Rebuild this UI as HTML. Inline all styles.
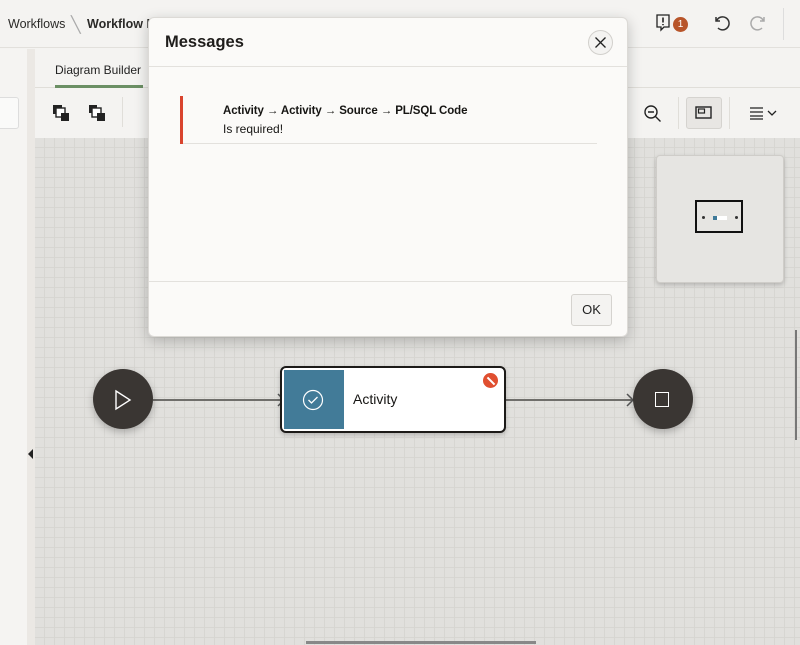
<!DOCTYPE html>
<html><head><style>
*{box-sizing:border-box;margin:0;padding:0}
body{width:800px;height:645px;overflow:hidden;background:#f4f3f1;font-family:"Liberation Sans",sans-serif;position:relative;color:#161513}
.abs{position:absolute}
.grid{left:35px;top:138px;width:765px;height:507px;background-color:#e1e0dd;background-image:linear-gradient(#d7d6d2 1px,transparent 1px),linear-gradient(90deg,#d7d6d2 1px,transparent 1px);background-size:10px 10px;background-position:-1px -1px}
</style></head><body>
<div class="abs" style="left:0;top:0;width:800px;height:48px;background:#f4f3f1;border-bottom:1px solid #e2e0dc"></div>
<div class="abs" style="left:8px;top:17px;font-size:12.5px;color:#2b2a28">Workflows</div>
<div class="abs" style="left:71px;top:15px;font-size:16px;color:#aaa">╲</div>
<div class="abs" style="left:87px;top:17px;font-size:12.5px;font-weight:bold;color:#2b2a28">Workflow D</div>
<svg class="abs" style="left:655px;top:14px" width="16" height="18" viewBox="0 0 16 18"><path d="M2 1h12v12H9l-3 3v-3H2z" fill="none" stroke="#222" stroke-width="1.3"/><path d="M8 3.5v5M8 10v1.2" stroke="#222" stroke-width="1.6"/></svg>
<div class="abs" style="left:673px;top:17px;width:15px;height:15px;border-radius:50%;background:#b8552a;color:#fff;font-size:10px;text-align:center;line-height:15px">1</div>
<svg class="abs" style="left:712px;top:13px" width="20" height="20" viewBox="0 0 20 20"><path d="M4 4v4h4M4.5 8A6.5 6.5 0 1 1 6 15" fill="none" stroke="#333" stroke-width="1.5"/></svg>
<svg class="abs" style="left:748px;top:13px" width="20" height="20" viewBox="0 0 20 20"><path d="M16 4v4h-4M15.5 8A6.5 6.5 0 1 0 14 15" fill="none" stroke="#aaa" stroke-width="1.5"/></svg>
<div class="abs" style="left:783px;top:8px;width:1px;height:32px;background:#ddd"></div>
<div class="abs" style="left:0;top:49px;width:27px;height:596px;background:#f5f4f2"></div>
<div class="abs" style="left:27px;top:49px;width:8px;height:596px;background:#ebe8e4"></div>
<div class="abs" style="left:-10px;top:97px;width:29px;height:32px;border:1px solid #ddd;border-radius:3px;background:#fafaf9"></div>
<div class="abs" style="left:28px;top:449px;width:0;height:0;border-top:5px solid transparent;border-bottom:5px solid transparent;border-right:5px solid #222"></div>
<div class="abs" style="left:35px;top:49px;width:765px;height:39px;background:#f4f3f1;border-bottom:1px solid #e0ded9"></div>
<div class="abs" style="left:55px;top:63px;font-size:12px;color:#222">Diagram Builder</div>
<div class="abs" style="left:55px;top:85px;width:88px;height:3px;background:#6b8f64"></div>
<div class="abs" style="left:35px;top:89px;width:765px;height:49px;background:#f4f3f1"></div>
<svg class="abs" style="left:52px;top:104px" width="18" height="18"><rect x="1" y="1" width="9" height="9" fill="#222"/><rect x="4" y="4" width="9" height="9" fill="#fff" stroke="#222" stroke-width="1.4"/><rect x="9" y="9" width="8" height="8" fill="#222"/></svg>
<svg class="abs" style="left:88px;top:104px" width="18" height="18"><rect x="1" y="1" width="8" height="8" fill="#222"/><rect x="4" y="4" width="9" height="9" fill="#fff" stroke="#222" stroke-width="1.4"/><rect x="9" y="9" width="8" height="8" fill="#222"/></svg>
<div class="abs" style="left:122px;top:97px;width:1px;height:30px;background:#e0ded9"></div>
<svg class="abs" style="left:643px;top:104px" width="20" height="20"><circle cx="8" cy="8" r="6" fill="none" stroke="#222" stroke-width="1.4"/><path d="M5 8h6M12.5 12.5l5 5" stroke="#222" stroke-width="1.4"/></svg>
<div class="abs" style="left:678px;top:97px;width:1px;height:32px;background:#e0ded9"></div>
<div class="abs" style="left:686px;top:97px;width:36px;height:32px;background:#e8e6e3;border:1px solid #d5d3cf;border-radius:3px"></div>
<svg class="abs" style="left:695px;top:106px" width="18" height="14"><rect x="1" y="1" width="15" height="11" fill="none" stroke="#222" stroke-width="1.4"/><rect x="3.5" y="3" width="6" height="4" fill="none" stroke="#222" stroke-width="1.2"/></svg>
<div class="abs" style="left:729px;top:97px;width:1px;height:32px;background:#e0ded9"></div>
<svg class="abs" style="left:749px;top:106px" width="30" height="14"><path d="M1 2h13M1 6h13M1 10h13M1 13h13" stroke="#222" stroke-width="1.2"/><path d="M19 5l4 4 4-4" fill="none" stroke="#222" stroke-width="1.3"/></svg>
<div class="abs grid"></div>
<div class="abs" style="left:795px;top:330px;width:2px;height:110px;background:#777"></div>
<div class="abs" style="left:306px;top:641px;width:230px;height:3px;background:#888"></div>
<div class="abs" style="left:656px;top:155px;width:128px;height:128px;background:#e6e5e2;border:1px solid #cfcdc9;border-radius:4px;box-shadow:0 2px 5px rgba(0,0,0,.2)"></div>
<div class="abs" style="left:695px;top:200px;width:48px;height:33px;border:2px solid #111"></div>
<div class="abs" style="left:702px;top:216px;width:3px;height:3px;border-radius:50%;background:#333"></div>
<div class="abs" style="left:735px;top:216px;width:3px;height:3px;border-radius:50%;background:#333"></div>
<div class="abs" style="left:713px;top:216px;width:14px;height:4px;background:#fff;border-left:4px solid #3f7a99"></div>
<div class="abs" style="left:153px;top:399px;width:130px;height:2px;background:#6f6e6b"></div>
<div class="abs" style="left:505px;top:399px;width:127px;height:2px;background:#6f6e6b"></div>
<svg class="abs" style="left:276px;top:393px" width="10" height="14"><path d="M2 1l6 6-6 6" fill="none" stroke="#555" stroke-width="1.5"/></svg>
<svg class="abs" style="left:625px;top:393px" width="10" height="14"><path d="M2 1l6 6-6 6" fill="none" stroke="#555" stroke-width="1.5"/></svg>
<div class="abs" style="left:93px;top:369px;width:60px;height:60px;border-radius:50%;background:#3a3633;box-shadow:0 3px 8px rgba(0,0,0,.25)"></div>
<svg class="abs" style="left:113px;top:389px" width="20" height="22"><path d="M3 2l14 9-14 9z" fill="none" stroke="#fff" stroke-width="1.4"/></svg>
<div class="abs" style="left:633px;top:369px;width:60px;height:60px;border-radius:50%;background:#3a3633;box-shadow:0 3px 8px rgba(0,0,0,.25)"></div>
<div class="abs" style="left:655px;top:392px;width:14px;height:15px;border:1.5px solid #fff"></div>
<div class="abs" style="left:280px;top:366px;width:226px;height:67px;border:2px solid #1c1a18;border-radius:6px;background:#fff;overflow:hidden;box-shadow:0 2px 5px rgba(0,0,0,.2)">
 <div style="position:absolute;left:2px;top:2px;width:60px;height:59px;background:#427b98"></div>
 <div style="position:absolute;left:71px;top:23px;font-size:14px;color:#161513">Activity</div>
</div>
<svg class="abs" style="left:302px;top:389px" width="22" height="22"><circle cx="11" cy="11" r="9.5" fill="none" stroke="#fff" stroke-width="1.2"/><path d="M6.5 11l3 3 6-6" fill="none" stroke="#fff" stroke-width="1.3"/></svg>
<div class="abs" style="left:483px;top:373px;width:15px;height:15px;border-radius:50%;background:#e04f30"></div>
<div class="abs" style="left:489.5px;top:375.5px;width:2px;height:10px;background:#fff;transform:rotate(-45deg)"></div>
<div class="abs" style="left:148px;top:17px;width:480px;height:320px;background:#fbfaf8;border:1px solid #dcdad6;border-radius:6px;box-shadow:0 4px 14px rgba(0,0,0,.22)">
 <div style="position:absolute;left:16px;top:15px;font-size:16.5px;font-weight:bold;color:#1f1d1b">Messages</div>
 <div style="position:absolute;left:439px;top:12px;width:25px;height:25px;border-radius:50%;border:1px solid #d2d0cc;background:#f4f3f1"></div>
 <svg style="position:absolute;left:445px;top:18px" width="13" height="13"><path d="M1.5 1.5l10 10M11.5 1.5l-10 10" stroke="#222" stroke-width="1.3"/></svg>
 <div style="position:absolute;left:0;top:48px;width:478px;height:1px;background:#e3e1dd"></div>
 <div style="position:absolute;left:31px;top:78px;width:3px;height:48px;background:#d9442e"></div>
 <div style="position:absolute;left:34px;top:125px;width:414px;height:1px;background:#e3e1dd"></div>
 <div style="position:absolute;left:74px;top:87px;font-size:11.5px;font-weight:bold;color:#161513;letter-spacing:-0.1px">Activity → Activity → Source → PL/SQL Code</div>
 <div style="position:absolute;left:74px;top:104px;font-size:12px;color:#161513">Is required!</div>
 <div style="position:absolute;left:0;top:263px;width:478px;height:1px;background:#e3e1dd"></div>
 <div style="position:absolute;left:422px;top:276px;width:41px;height:32px;border:1px solid #d5d3cf;border-radius:3px;background:#f4f3f1;font-size:13px;text-align:center;line-height:30px;color:#222">OK</div>
</div>
</body></html>
